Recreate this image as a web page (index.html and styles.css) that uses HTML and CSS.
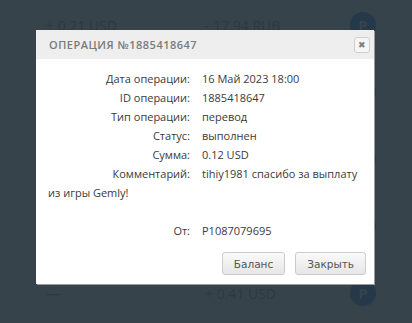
FILE: index.html
```html
<!DOCTYPE html>
<html lang="ru">
<head>
    <meta charset="UTF-8">
    <title>Операция</title>
    <link rel="stylesheet" href="styles.css">
</head>
<body>
    <div class="history">
        <div class="history-row">
            <span class="amount">+ 0.21 USD</span>
            <span class="amount">- 17.94 RUB</span>
            <span class="pay-icon">P</span>
        </div>
        <div class="history-row"><span class="amount"></span><span class="amount"></span><span class="pay-icon">P</span></div>
        <div class="history-row"><span class="amount"></span><span class="amount"></span><span class="pay-icon">P</span></div>
        <div class="history-row"><span class="amount"></span><span class="amount"></span><span class="pay-icon">P</span></div>
        <div class="history-row">
            <span class="amount">—</span>
            <span class="amount">+ 0.41 USD</span>
            <span class="pay-icon">P</span>
        </div>
    </div>

    <div class="dialog">
        <div class="dialog-title">
            <span class="title-text">Операция №1885418647</span>
            <button class="close-btn">&#10006;</button>
        </div>
        <div class="dialog-body">
            <span class="label">Дата операции:</span>16 Май 2023 18:00<br>
            <span class="label">ID операции:</span>1885418647<br>
            <span class="label">Тип операции:</span>перевод<br>
            <span class="label">Статус:</span>выполнен<br>
            <span class="label">Сумма:</span>0.12 USD<br>
            <span class="nobr"><span class="label">Комментарий:</span>tihiy1981 спасибо за выплату</span> из игры Gemly!<br>
            <br>
            <span class="label">От:</span>P1087079695
        </div>
        <div class="dialog-buttons">
            <button class="btn">Баланс</button>
            <button class="btn">Закрыть</button>
        </div>
    </div>
</body>
</html>
```

FILE: styles.css
```css
/* Page */
html {
    overflow: hidden;
}

body {
    margin: 0;
    height: 323px;
    overflow: hidden;
    background: #36434b;
    font-family: "Open Sans", sans-serif;
    position: relative;
}

/* Dimmed history list behind the dialog */
.history {
    padding-top: 12px;
}

.history-row {
    display: flex;
    align-items: center;
    height: 26px;
    margin-bottom: 41px;
    padding-left: 46px;
    color: #2d3941;
    font-size: 14px;
}

.history-row:last-child {
    margin-bottom: 0;
}

.amount {
    width: 159px;
}

.amount + .amount {
    width: 145px;
}

.pay-icon {
    width: 26px;
    height: 26px;
    border-radius: 50%;
    background: #25394a;
    color: #36434b;
    font-weight: bold;
    font-size: 15px;
    display: flex;
    align-items: center;
    justify-content: center;
}

/* Dialog */
.dialog {
    position: absolute;
    left: 36px;
    top: 30px;
    width: 338px;
    height: 254px;
    background: #fff;
    box-shadow: 1px 1px 0 #9a9a9a;
    display: flex;
    flex-direction: column;
}

.dialog-title {
    height: 29px;
    background: #eeeeee;
    display: flex;
    align-items: center;
    justify-content: space-between;
    padding: 0 4px 0 13px;
}

.title-text {
    text-transform: uppercase;
    color: #7a7a7a;
    font-size: 11px;
    font-weight: 600;
    letter-spacing: 0.5px;
}

.close-btn {
    width: 16px;
    height: 16px;
    padding: 0;
    border: 1px solid #cfcfcf;
    border-radius: 3px;
    background: #f6f6f6;
    color: #7c7c7c;
    font-size: 9px;
    line-height: 14px;
    margin-top: 1px;
}

.dialog-body {
    flex: 1;
    padding: 10px 12px 0;
    font-size: 11px;
    line-height: 19px;
    color: #3a3a3a;
}

.label {
    display: inline-block;
    width: 142px;
    margin-right: 12px;
    text-align: right;
    white-space: nowrap;
}

.nobr {
    white-space: nowrap;
}

.dialog-buttons {
    display: flex;
    justify-content: flex-end;
    gap: 10px;
    padding: 0 8px 9px;
}

.btn {
    height: 23px;
    padding: 0 11px;
    border: 1px solid #cccccc;
    border-radius: 3px;
    background: linear-gradient(#fafafa, #e6e6e6);
    color: #555;
    font-family: "DejaVu Sans", sans-serif;
    font-size: 10.5px;
}
```
